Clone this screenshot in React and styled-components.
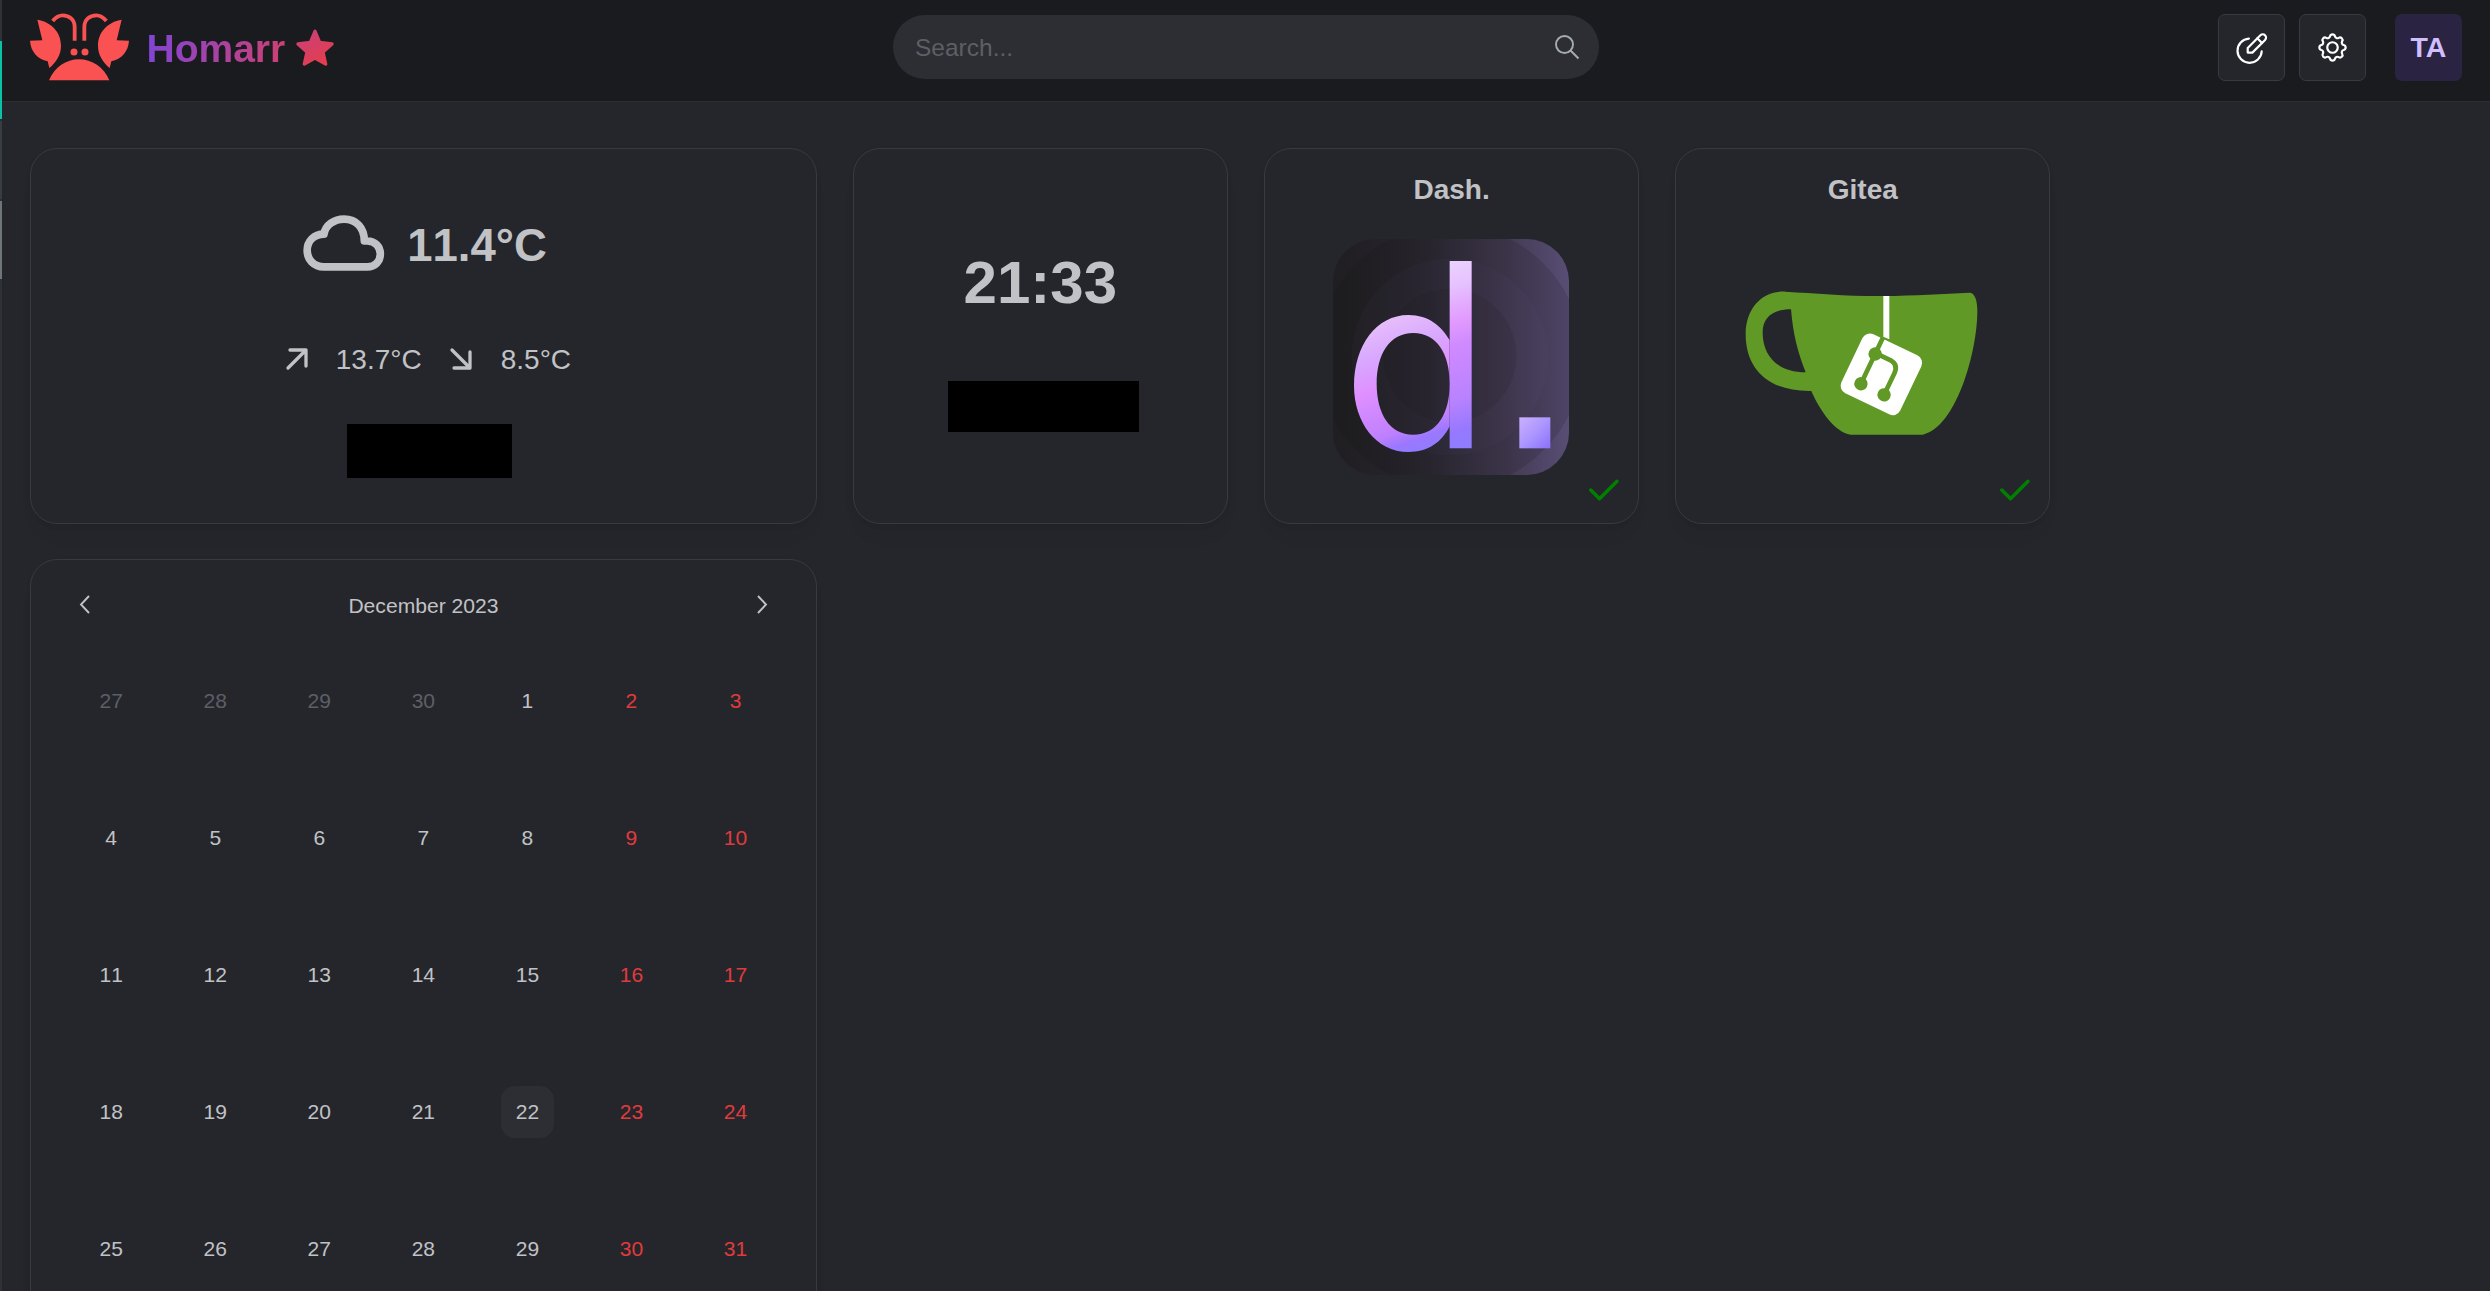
import React from "react";
import styled, { createGlobalStyle } from "styled-components";

const Global = createGlobalStyle`
  * { box-sizing: border-box; }
  html, body, #root { height: 100%; }
  body {
    margin: 0;
    overflow: hidden;
    background: #25262b;
    color: #c1c2c5;
    font-family: "Liberation Sans", Arial, sans-serif;
    font-kerning: none;
  }
`;

const Shell = styled.div`
  display: flex;
  height: 1291px;
  overflow: hidden;
`;
const Edge = styled.div`
  display: flex;
  flex-direction: column;
  flex: none;
  width: 2px;
  background: #2e3236;
`;
const EdgeMark = styled.i`
  height: ${(p) => p.$h}px;
  flex: none;
  background: ${(p) => p.$c};
`;
const Page = styled.div`
  flex: 1;
  min-width: 0;
`;
const Header = styled.header`
  display: flex;
  align-items: center;
  justify-content: space-between;
  height: 102px;
  padding: 0 28px 6px 28px;
  background: #1a1b1e;
  border-bottom: 1px solid #2c2e33;
`;
const HeaderSide = styled.div`
  display: flex;
  align-items: center;
  flex: 1;
  justify-content: ${(p) => (p.$end ? "flex-end" : "flex-start")};
`;
const Logo = styled.svg`
  margin-bottom: 1px;
`;
const Brand = styled.span`
  margin-left: 16.500px;
  padding-top: 2px;
  font-size: 39px;
  line-height: 60px;
  font-weight: 700;
  background: linear-gradient(100deg, #7e45d8 0%, #d04070 100%);
  -webkit-background-clip: text;
  background-clip: text;
  color: transparent;
`;
const Star = styled.svg`
  margin: 0 0 1px 11px;
`;
const Search = styled.label`
  display: flex;
  align-items: center;
  width: 706px;
  height: 64px;
  margin-bottom: 1px;
  padding: 0 18px 0 22px;
  border-radius: 32px;
  background: #2c2e33;
`;
const SearchInput = styled.input`
  flex: 1;
  min-width: 0;
  padding: 2px 0 0;
  border: 0;
  outline: 0;
  background: none;
  font: 24.500px "Liberation Sans", Arial, sans-serif;
  color: #c1c2c5;
  &::placeholder { color: #5c5f66; opacity: 1; }
`;
const IconButton = styled.button`
  display: flex;
  align-items: center;
  justify-content: center;
  width: 67px;
  height: 67px;
  padding: 0;
  margin-right: ${(p) => p.$gap}px;
  border: 1px solid #373a40;
  border-radius: 7px;
  background: #25262b;
  color: #fff;
`;
const Avatar = styled.div`
  display: flex;
  align-items: center;
  justify-content: center;
  width: 67px;
  height: 67px;
  border-radius: 7px;
  background: #2b2342;
  color: #d0bfff;
  font-size: 28.500px;
  font-weight: 700;
  font-kerning: normal;
`;

const Board = styled.main`
  display: grid;
  grid-template-columns: repeat(5, 375.250px);
  grid-template-rows: 376px 786px;
  gap: 35px 36px;
  padding: 46px 0 0 28.200px;
`;
const Card = styled.section`
  position: relative;
  display: flex;
  flex-direction: column;
  align-items: center;
  grid-column: ${(p) => (p.$first ? "1 / " : "")}span ${(p) => p.$span || 1};
  border: 1px solid #373a40;
  border-radius: 27px;
  background: #25262b;
  box-shadow: 0 1.600px 5px rgba(0, 0, 0, 0.05), 0 16px 24px -8px rgba(0, 0, 0, 0.04),
    0 11px 11px -11px rgba(0, 0, 0, 0.04);
`;
const Redacted = styled.div`
  width: ${(p) => p.$w}px;
  height: ${(p) => p.$h}px;
  margin-left: ${(p) => p.$shift}px;
  background: #000;
`;

const Now = styled.div`
  display: flex;
  align-items: center;
  height: 72px;
  margin: 58px 0 0 3px;
  font-size: 45.500px;
  font-weight: 700;
`;
const NowText = styled.span`
  margin-left: 22px;
  padding-top: 6px;
`;
const Range = styled.div`
  display: flex;
  align-items: center;
  height: 40px;
  margin: 60px 0 45px 9px;
  font-size: 28px;
`;
const RangeText = styled.span`
  margin: 0 ${(p) => (p.$last ? 0 : 27)}px 0 ${(p) => (p.$last ? 28 : 27)}px;
  padding-top: 2px;
`;
const Time = styled.div`
  margin-top: 99px;
  height: 70px;
  line-height: 70px;
  font-size: 60px;
  font-weight: 700;
`;
const TimeBlock = styled.div`
  padding-top: 63px;
`;
const AppTitle = styled.h2`
  margin: 22px 0 0;
  height: 40px;
  line-height: 38px;
  font-size: 28px;
  font-weight: 700;
`;
const AppLogo = styled.div`
  display: flex;
  align-items: center;
  justify-content: center;
  width: 236px;
  height: 236px;
  margin: 28px 1px 0 0;
`;
const Status = styled.svg`
  position: absolute;
  right: 14px;
  bottom: 12px;
`;

const MonthBar = styled.div`
  display: flex;
  align-items: center;
  justify-content: space-between;
  align-self: stretch;
  height: 52px;
  margin-top: 19px;
  padding: 0 40px;
  font-size: 21.100px;
`;
const MonthName = styled.span`
  padding-top: 2px;
`;
const Days = styled.div`
  display: grid;
  grid-template-columns: repeat(7, 104.060px);
  grid-auto-rows: 137px;
  align-self: flex-start;
  margin: 1px 0 0 28px;
`;
const DayCell = styled.div`
  display: flex;
  align-items: center;
  justify-content: center;
`;
const Day = styled.button`
  width: 53px;
  height: 52px;
  padding: 0;
  border: 0;
  border-radius: 14px;
  background: ${(p) => (p.$today ? "#2c2e33" : "transparent")};
  color: ${(p) => (p.$outside ? "#5c5f66" : p.$weekend ? "#e03b3b" : "#c1c2c5")};
  font: 21px "Liberation Sans", Arial, sans-serif;
  font-kerning: none;
`;

function Lobster() {
  return (
    <Logo width="100" height="68" viewBox="0 0 300 204" fill="#fa5252">
      <path d="M22 20C65 27 93 58 93 98 93 126 78 148 58 165L53 145C22 138 2 115 0 83L37 82Z" />
      <path d="M275 20C232 27 204 58 204 98 204 126 219 148 239 165L244 145C275 138 295 115 297 83L260 82Z" />
      <path d="M57 202C74 162 108 139 147 139S221 162 238 202Z" />
      <circle cx="132" cy="117" r="10.5" />
      <circle cx="165" cy="117" r="10.5" />
      <path
        d="M68 24C78 12 86 7 98 7C118 7 134 20 134 42V83M229 24C219 12 211 7 199 7C179 7 163 20 163 42V83"
        fill="none"
        stroke="#fa5252"
        strokeWidth="11.5"
      />
    </Logo>
  );
}

function Cloud() {
  return (
    <svg width="82" height="56" viewBox="0 0 246 168" fill="none" stroke="#c1c2c5" strokeWidth="23" strokeLinejoin="round">
      <path d="M63 155.500C32 155.500 12.500 133 12.500 106C12.500 79 32 57.500 63 57.500C67 30 94 12.500 123 12.500C160 12.500 184 38 184 78H193C216 78 232 95 232 117C232 139 216 155.500 193 155.500Z" />
    </svg>
  );
}

function Dash() {
  return (
    <svg width="236" height="236" viewBox="0 0 708 708">
      <defs>
        <linearGradient id="dashBack" x1="0" y1="0" x2="1" y2="0">
          <stop offset="0.05" stopColor="#1d1c1e" />
          <stop offset="0.4" stopColor="#27242d" />
          <stop offset="0.75" stopColor="#3c354a" />
          <stop offset="1" stopColor="#4e4466" />
        </linearGradient>
        <linearGradient id="dashRing" x1="0" y1="0" x2="1" y2="0">
          <stop offset="0" stopColor="#a08cd8" stopOpacity="0.02" />
          <stop offset="0.5" stopColor="#a08cd8" stopOpacity="0.03" />
          <stop offset="1" stopColor="#a08cd8" stopOpacity="0.14" />
        </linearGradient>
        <linearGradient id="dashInk" gradientUnits="userSpaceOnUse" x1="225" y1="60" x2="390" y2="615">
          <stop offset="0" stopColor="#efdcff" />
          <stop offset="0.2" stopColor="#e6c2ff" />
          <stop offset="0.38" stopColor="#e29aff" />
          <stop offset="0.5" stopColor="#d08aff" />
          <stop offset="0.77" stopColor="#b982ff" />
          <stop offset="0.93" stopColor="#9678ff" />
          <stop offset="1" stopColor="#8f7cff" />
        </linearGradient>
        <linearGradient id="dashBowl" gradientUnits="userSpaceOnUse" x1="130" y1="240" x2="270" y2="640">
          <stop offset="0" stopColor="#e8c0fa" />
          <stop offset="0.25" stopColor="#d8a8ff" />
          <stop offset="0.47" stopColor="#df90ff" />
          <stop offset="0.8" stopColor="#bf80ff" />
          <stop offset="0.9" stopColor="#9a78ff" />
          <stop offset="1" stopColor="#8f7cff" />
        </linearGradient>
        <linearGradient id="dashDot" x1="0" y1="0" x2="1" y2="1">
          <stop offset="0" stopColor="#cbb0ff" />
          <stop offset="0.5" stopColor="#ac96ff" />
          <stop offset="1" stopColor="#8a70fa" />
        </linearGradient>
        <clipPath id="dashClip">
          <rect width="708" height="708" rx="127" />
        </clipPath>
      </defs>
      <g clipPath="url(#dashClip)">
        <rect width="708" height="708" fill="url(#dashBack)" />
        <path
          fill="url(#dashRing)"
          fillRule="evenodd"
          d="M-60 -60H768V768H-60ZM-46 354A397 397 0 1 0 748 354A397 397 0 1 0 -46 354Z"
        />
        <circle cx="350" cy="354" r="295" fill="#a08cd8" fillOpacity="0.03" />
        <circle cx="350" cy="350" r="200" fill="#18161c" fillOpacity="0.12" />
      </g>
      <path
        fill="url(#dashBowl)"
        fillRule="evenodd"
        d="M226 228C288 228 326 262 350 304V562C326 610 286 639 226 639C128 639 63 548 63 440C63 320 130 228 226 228ZM241 282C170 282 131 345 131 434C131 524 170 587 241 587C312 587 350 524 350 434C350 345 312 282 241 282Z"
      />
      <path fill="url(#dashInk)" d="M350 66H416V628H350Z" />
      <rect x="559" y="535" width="93" height="93" fill="url(#dashDot)" />
    </svg>
  );
}

function Gitea() {
  return (
    <svg width="236" height="236" viewBox="4 0 708 708">
      <path
        fill="#609926"
        fillRule="evenodd"
        d="M128 158C220 163 320 172 420 171C520 170 600 165 680 161C696 161 704 183 704 215C704 340 640 565 540 587H324C276 580 232 515 206 456C76 458 9 390 9 285C9 210 57 154 128 158ZM145 211C90 211 60 235 60 281C60 345 100 400 189 400C164 335 152 290 145 211Z"
      />
      <path fill="#fff" d="M422 171H440V301L422 293Z" />
      <g transform="translate(416 406) rotate(25.500)">
        <rect x="-98" y="-98" width="196" height="196" rx="25" fill="#fff" />
        <g fill="none" stroke="#609926" strokeWidth="14">
          <path d="M-43 -100V52M-43 -50H7Q34 -48 34 -20V52" />
        </g>
        <g fill="#609926">
          <circle cx="-43" cy="-47" r="20" />
          <circle cx="-43" cy="52" r="20" />
          <circle cx="34" cy="52" r="20" />
        </g>
      </g>
    </svg>
  );
}

function Arrow({ down }) {
  return (
    <svg width="24" height="24" viewBox="0 0 24 24" fill="none" stroke="#c1c2c5" strokeWidth="3.3" strokeLinecap="round" strokeLinejoin="round">
      <path d={down ? "M3 3L21 21M21 5V21H5" : "M3 21L21 3M5 3H21V19"} />
    </svg>
  );
}

function Chevron({ right }) {
  return (
    <svg width="28" height="28" viewBox="0 0 28 28" fill="none" stroke="#c1c2c5" strokeWidth="1.900">
      <path d={right ? "M10 5L18 13.500L10 22" : "M18 5L10 13.500L18 22"} />
    </svg>
  );
}

function Check() {
  return (
    <Status width="42" height="42" viewBox="0 0 24 24" fill="none" stroke="#008000" strokeWidth="2" strokeLinecap="round" strokeLinejoin="round">
      <path d="M5 12l5 5l10 -10" />
    </Status>
  );
}

const tabler = {
  width: 35,
  height: 35,
  fill: "none",
  stroke: "currentColor",
  strokeWidth: 1.5,
  strokeLinecap: "round",
  strokeLinejoin: "round",
};

const days = [27, 28, 29, 30, ...Array.from({ length: 31 }, (_, i) => i + 1)];

export default function App() {
  return (
    <Shell>
      <Global />
      <Edge>
        <EdgeMark $h={41} $c="#2e3136" />
        <EdgeMark $h={78} $c="#0ac2a8" />
        <EdgeMark $h={2} $c="#2a2c30" />
        <EdgeMark $h={78} $c="#383e40" />
        <EdgeMark $h={2} $c="#2c2f33" />
        <EdgeMark $h={78} $c="#6f7676" />
      </Edge>
      <Page>
        <Header>
          <HeaderSide>
            <Lobster />
            <Brand>Homarr</Brand>
            <Star width="38" height="37" viewBox="0 0 114 111">
              <defs>
                <linearGradient id="star" x1="0" y1="0" x2="0.6" y2="1">
                  <stop offset="0" stopColor="#c8407c" />
                  <stop offset="1" stopColor="#e23e50" />
                </linearGradient>
              </defs>
              <path
                fill="url(#star)"
                stroke="url(#star)"
                strokeWidth="10"
                strokeLinejoin="round"
                d="M57 7L71 40L108 45L81 69L89 105L57 87L25 105L33 69L6 45L43 40Z"
              />
            </Star>
          </HeaderSide>
          <Search>
            <SearchInput placeholder="Search..." />
            <svg width="28" height="28" viewBox="0 0 28 28" fill="none" stroke="#a6adb2" strokeWidth="1.900">
              <circle cx="11.500" cy="11.500" r="8.500" />
              <path d="M17.500 17.500L25.500 25.500" />
            </svg>
          </Search>
          <HeaderSide $end>
            <IconButton $gap={14}>
              <svg {...tabler} viewBox="0.600 0 24 24">
                <path d="M10.800 5.900A8.300 8.300 0 1 0 19.600 14.600" />
                <path d="M10 15.500V12.300L18.700 3.600A2.250 2.250 0 0 1 21.900 6.800L13.200 15.500Z" />
                <path d="M16.600 5.700L19.800 8.900" />
              </svg>
            </IconButton>
            <IconButton $gap={29}>
              <svg {...tabler} viewBox="0 0 24 24">
                <path d="M10.325 4.317c.426 -1.756 2.924 -1.756 3.350 0a1.724 1.724 0 0 0 2.573 1.066c1.543 -.940 3.310 .826 2.370 2.370a1.724 1.724 0 0 0 1.065 2.572c1.756 .426 1.756 2.924 0 3.350a1.724 1.724 0 0 0 -1.066 2.573c.940 1.543 -.826 3.310 -2.370 2.370a1.724 1.724 0 0 0 -2.572 1.065c-.426 1.756 -2.924 1.756 -3.350 0a1.724 1.724 0 0 0 -2.573 -1.066c-1.543 .940 -3.310 -.826 -2.370 -2.370a1.724 1.724 0 0 0 -1.065 -2.572c-1.756 -.426 -1.756 -2.924 0 -3.350a1.724 1.724 0 0 0 1.066 -2.573c-.940 -1.543 .826 -3.310 2.370 -2.370c1 .608 2.296 .070 2.572 -1.065z" />
                <circle cx="12" cy="12" r="3.600" />
              </svg>
            </IconButton>
            <Avatar>TA</Avatar>
          </HeaderSide>
        </Header>
        <Board>
          <Card $span={2}>
            <Now>
              <Cloud />
              <NowText>11.4°C</NowText>
            </Now>
            <Range>
              <Arrow />
              <RangeText>13.7°C</RangeText>
              <Arrow down />
              <RangeText $last>8.5°C</RangeText>
            </Range>
            <Redacted $w={165} $h={54} $shift={12} />
          </Card>
          <Card>
            <Time>21:33</Time>
            <TimeBlock>
              <Redacted $w={191} $h={51} $shift={6} />
            </TimeBlock>
          </Card>
          <Card>
            <AppTitle>Dash.</AppTitle>
            <AppLogo>
              <Dash />
            </AppLogo>
            <Check />
          </Card>
          <Card>
            <AppTitle>Gitea</AppTitle>
            <AppLogo>
              <Gitea />
            </AppLogo>
            <Check />
          </Card>
          <Card $span={2} $first>
            <MonthBar>
              <Chevron />
              <MonthName>December 2023</MonthName>
              <Chevron right />
            </MonthBar>
            <Days>
              {days.map((d, i) => (
                <DayCell key={i}>
                  <Day $outside={i < 4} $weekend={i % 7 > 4} $today={i === 25}>
                    {d}
                  </Day>
                </DayCell>
              ))}
            </Days>
          </Card>
        </Board>
      </Page>
    </Shell>
  );
}
